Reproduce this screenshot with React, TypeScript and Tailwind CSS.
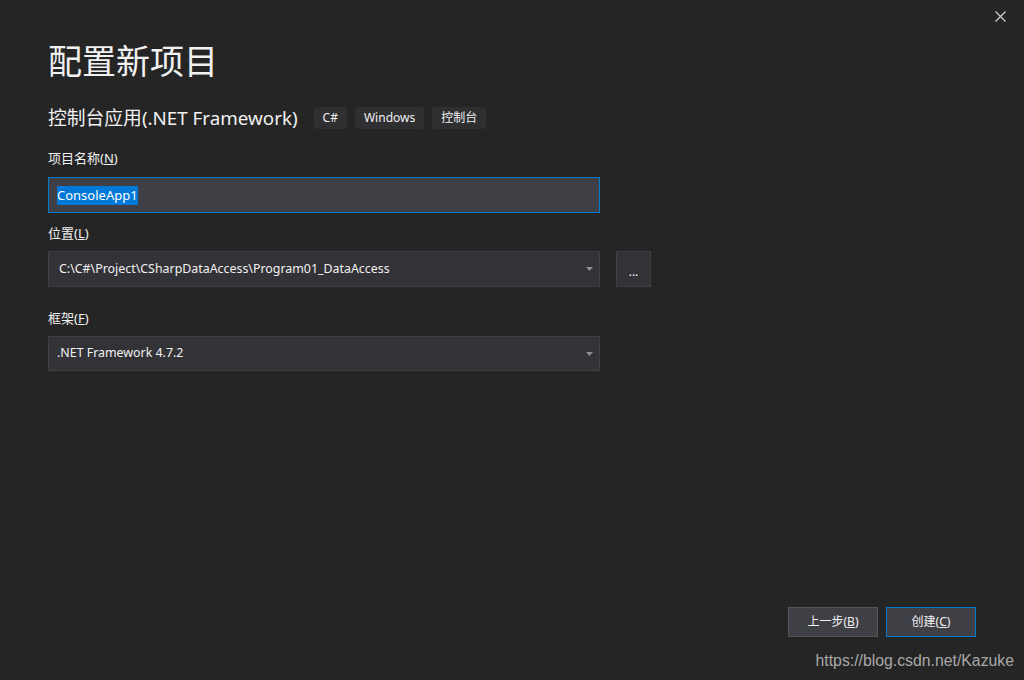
import React from 'react';

const font = { fontFamily: '"Segoe UI", "Noto Sans", "Noto Sans CJK SC", sans-serif' };

const Tag = ({ children }: { children: React.ReactNode }) => (
    <span className="flex h-[22px] items-center rounded-[3px] bg-[#2f2f31] px-[9px] text-[12px] text-[#f1f1f1]">
        {children}
    </span>
);

const Caret = () => (
    <svg width="7" height="4" viewBox="0 0 7 4" className="ml-auto">
        <path d="M0 0h7L3.5 4z" fill="#8e8e90" />
    </svg>
);

const App = () => {
    return (
        <div className="relative h-[680px] w-[1024px] overflow-hidden bg-[#252526] text-[#f1f1f1]" style={font}>
            <button className="absolute right-[18px] top-[10px] flex h-[12px] w-[12px] items-center justify-center">
                <svg width="11" height="11" viewBox="0 0 11 11">
                    <path d="M0.5 0.5l10 10M10.5 0.5l-10 10" stroke="#d0d0d0" strokeWidth="1.2" />
                </svg>
            </button>

            <div className="flex flex-col px-[48px] pt-[38px]">
                <h1 className="text-[34px] leading-[46px] text-[#f1f1f1]">配置新项目</h1>

                <div className="mt-[21px] flex items-center gap-[8px]">
                    <h2 className="mr-[8px] text-[18.8px] leading-[26px]">控制台应用(.NET Framework)</h2>
                    <Tag>C#</Tag>
                    <Tag>Windows</Tag>
                    <Tag>控制台</Tag>
                </div>

                <label className="mt-[18px] text-[13px] leading-[18px]">
                    项目名称(<span className="underline">N</span>)
                </label>
                <div className="mt-[10px] flex h-[36px] w-[552px] items-center border border-[#007acc] bg-[#3f3f46] px-[8px]">
                    <span className="bg-[#0078d7] text-[13px] leading-[19px] text-white">ConsoleApp1</span>
                </div>

                <label className="mt-[11px] text-[13px] leading-[18px]">
                    位置(<span className="underline">L</span>)
                </label>
                <div className="mt-[9px] flex items-center gap-[16px]">
                    <div className="flex h-[36px] w-[552px] items-center border border-[#3f3f46] bg-[#333337] pl-[10px] pr-[6px] text-[12.4px]">
                        <span>C:\C#\Project\CSharpDataAccess\Program01_DataAccess</span>
                        <Caret />
                    </div>
                    <button className="flex h-[36px] w-[35px] items-center justify-center border border-[#3f3f46] bg-[#333337] text-[12px] leading-none">
                        <span className="mt-[6px]">...</span>
                    </button>
                </div>

                <label className="mt-[22px] text-[13px] leading-[18px]">
                    框架(<span className="underline">F</span>)
                </label>
                <div className="mt-[9px] flex h-[35px] w-[552px] items-center border border-[#3f3f46] bg-[#333337] pl-[8px] pr-[6px] text-[12.4px]">
                    <span>.NET Framework 4.7.2</span>
                    <Caret />
                </div>
            </div>

            <div className="absolute right-[48px] top-[607px] flex gap-[8px]">
                <button className="flex h-[30px] w-[90px] items-center justify-center border border-[#555558] bg-[#3f3f46] text-[12px]">
                    上一步(<span className="underline">B</span>)
                </button>
                <button className="flex h-[30px] w-[90px] items-center justify-center border border-[#007acc] bg-[#3f3f46] text-[12px]">
                    创建(<span className="underline">C</span>)
                </button>
            </div>

            <div
                className="absolute right-[10px] top-[649px] text-[15.8px] text-[#a8a8a8]"
                style={{ fontFamily: '"Liberation Sans", Arial, sans-serif' }}
            >
                https://blog.csdn.net/Kazuke
            </div>
        </div>
    );
};

export default App;
